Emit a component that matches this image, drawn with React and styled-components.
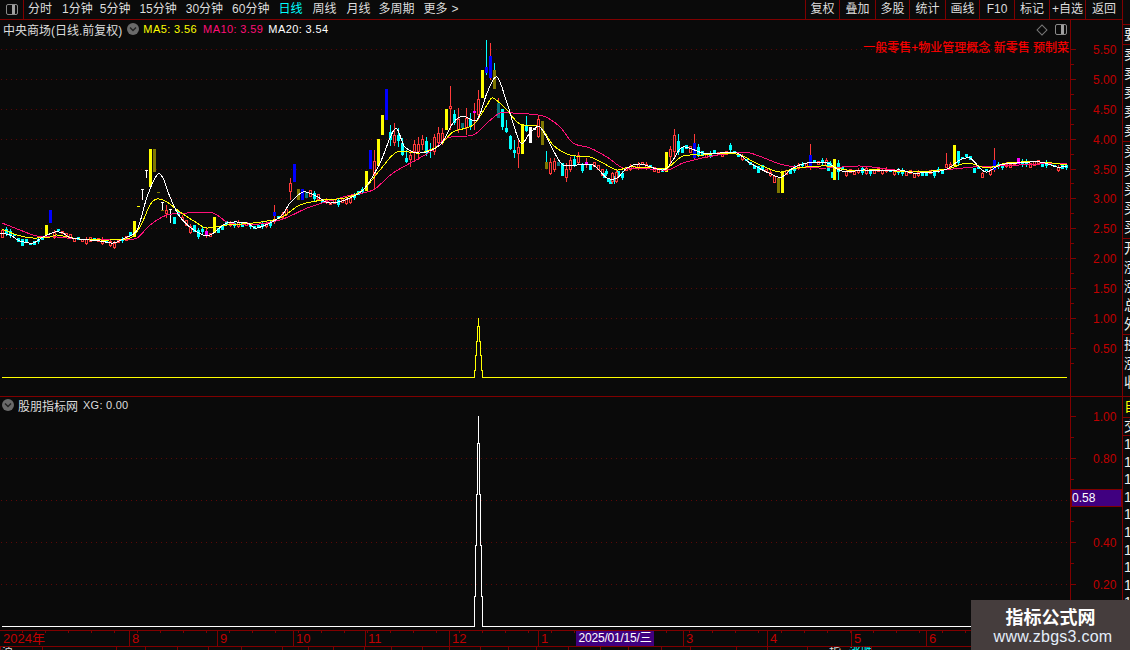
import React from "react";
import styled, { createGlobalStyle } from "styled-components";

const RED = "#800000";
const FONT = `"Liberation Sans", "Noto Sans CJK SC", sans-serif`;

const Global = createGlobalStyle`
  html, body { margin: 0; padding: 0; background: #0a0a0a; }
  * { box-sizing: border-box; }
`;

const Page = styled.div`
  width: 1130px; height: 650px; position: relative; overflow: hidden;
  background: #0a0a0a; font-family: ${FONT}; color: #ddd;
  display: flex;
`;
const MainColumn = styled.div`
  width: 1122px; flex: none; display: flex; flex-direction: column;
`;
const Toolbar = styled.div`
  height: 20px; flex: none; display: flex; align-items: stretch;
  border-bottom: 1px solid ${RED};
`;
const IconCell = styled.div`
  width: 24px; border-right: 1px solid ${RED}; display: flex; align-items: center; justify-content: center;
`;
const PanelGlyph = styled.span`
  display: block; width: 12px; height: 11px; border: 1px solid #8a8a8a; border-radius: 2px;
  background: linear-gradient(to right, #0a0a0a 50%, #a0a0a0 50%, #a0a0a0 85%, #0a0a0a 85%);
`;
const Periods = styled.div`
  display: flex; align-items: center; padding-left: 4px; font-size: 12px; line-height: 19px; flex: 1;
`;
const Period = styled.span`
  margin-right: ${p => p.$gap}px; color: ${p => (p.$active ? "#00ffff" : "#ddd")}; white-space: nowrap;
`;
const ToolButton = styled.div`
  width: ${p => p.$w}px; border-left: 1px solid ${RED}; font-size: 12px; line-height: 18px; text-align: center; white-space: nowrap;
`;
const Charts = styled.div`
  height: 610px; flex: none; display: flex; flex-direction: column;
`;
const Pane = styled.div`
  position: relative; height: ${p => p.$h}px; flex: none; border-bottom: ${p => (p.$rule ? `1px solid ${RED}` : "none")};
`;
const ChartSvg = styled.svg`
  display: block; width: 1122px; height: 100%;
  text { font-family: ${FONT}; font-size: 12px; }
`;
const Legend = styled.div`
  position: absolute; left: ${p => p.$left}px; top: ${p => p.$top}px; display: flex; align-items: center; height: 16px; font-size: 12px; white-space: nowrap;
`;
const Chevron = styled.span`
  width: 12px; height: 12px; border-radius: 50%; background: #6a6a6a; display: inline-flex; align-items: center; justify-content: center; flex: none; margin-left: ${p => p.$ml || 0}px;
`;
const LegendName = styled.span`
  color: #ddd; margin-left: ${p => p.$ml || 0}px;
`;
const Ma = styled.span`
  color: ${p => p.$c}; margin-left: ${p => p.$ml}px; letter-spacing: ${p => p.$ls}px; font-size: 11px;
`;
const Concepts = styled.div`
  position: absolute; right: 53px; top: 20px; color: #ff0000; font-size: 12px; line-height: 16px; white-space: nowrap; -webkit-text-stroke: 0.15px #ff0000;
`;
const PaneTools = styled.div`
  position: absolute; right: 55px; top: 4px; display: flex; align-items: center; gap: 9px;
`;
const Diamond = styled.span`
  width: 8px; height: 8px; border: 1px solid #777; transform: rotate(45deg); display: block;
`;
const TimeAxis = styled.div`
  height: 17px; flex: none; position: relative; display: flex; border-top: 1px solid ${RED}; border-bottom: 1px solid ${RED};
  &::before {
    content: ""; position: absolute; left: 0; right: 0; top: 0; height: 2px;
    background: repeating-linear-gradient(to right, transparent 0 22px, ${RED} 22px 23px);
  }
`;
const Month = styled.div`
  width: ${p => p.$w}px; flex: none; border-left: ${p => (p.$first ? "none" : `1px solid ${RED}`)}; padding-left: ${p => (p.$first ? 3 : 2)}px;
  color: #c00000; font-size: 13px; line-height: 15px; white-space: nowrap;
`;
const DateChip = styled.div`
  position: absolute; left: 576px; top: 0; width: 78px; height: 15px; background: #400080; color: #fff;
  font-size: 12px; line-height: 15px; text-align: center; white-space: nowrap; letter-spacing: -0.2px; overflow: hidden;
`;
const StatusBar = styled.div`
  height: 3px; flex: none; display: flex; overflow: hidden;
`;
const StatusCell = styled.div`
  width: ${p => p.$w}px; flex: none; border-left: 1px solid ${RED}; color: #ddd; padding-left: ${p => p.$pad || 0}px;
  font-size: 12px; line-height: 12px; white-space: nowrap; overflow: hidden;
`;
const StatusAccent = styled.span`
  color: #00ffff; margin-left: 8px;
`;
const Sidebar = styled.div`
  width: 8px; flex: none; height: 650px; border-left: 1px solid ${RED}; overflow: hidden; display: flex; flex-direction: column;
`;
const SideGroup = styled.div`
  height: ${p => p.$h}px; flex: none; overflow: hidden; border-bottom: ${p => (p.$open ? "none" : `1px solid ${RED}`)};
  color: ${p => p.$c || "#eee"}; font-size: 14px; line-height: ${p => p.$lh}px; padding-left: 1px; white-space: nowrap;
`;
const SideRow = styled.div`
  height: ${p => p.$lh}px; width: 20px;
`;
const Watermark = styled.div`
  position: absolute; left: 971px; top: 600px; width: 159px; height: 50px; background: #453d3d;
  display: flex; flex-direction: column; align-items: center; padding-top: 5px;
`;
const WmTitle = styled.div`
  color: #fff; font-size: 18px; font-weight: 700; line-height: 22px; font-family: "Noto Sans CJK SC", sans-serif;
`;
const WmUrl = styled.div`
  color: #e4eefa; font-size: 16px; line-height: 19px; margin-left: 5px; font-family: "Liberation Sans", sans-serif; letter-spacing: 0.25px;
`;

/* ---------- chart data ---------- */
const WHITE = [[0,233],[10,235],[20,241],[33,243],[43,237],[55,232],[63,233],[72,238],[100,241],[113,243],[125,238],[137,230],[147,197],[157,175],[163,178],[170,197],[180,217],[197,232],[210,235],[227,223],[247,223],[257,228],[280,217],[290,203],[303,192],[316,196],[330,203],[350,198],[365,188],[380,163],[395,129],[405,147],[420,153],[440,145],[453,123],[463,116],[477,120],[487,93],[497,77],[507,103],[520,142],[530,133],[540,127],[553,150],[563,165],[577,165],[593,165],[607,178],[617,178],[627,168],[640,164],[663,170],[673,160],[683,147],[703,153],[720,153],[737,153],[750,163],[773,175],[782,177],[793,168],[807,163],[827,163],[837,169],[847,172],[863,170],[880,171],[900,170],[913,173],[933,172],[947,169],[960,160],[970,158],[980,168],[987,172],[1000,165],[1017,163],[1040,162],[1057,167],[1067,166]];
const YELLOW = [[2,229],[17,235],[33,238],[50,237],[57,235],[80,239],[110,240],[130,238],[140,227],[150,205],[157,199],[167,202],[180,212],[197,223],[207,228],[227,225],[253,223],[280,218],[300,205],[323,200],[345,198],[363,190],[380,170],[397,152],[420,153],[440,145],[453,132],[473,125],[487,105],[493,98],[507,110],[520,124],[540,127],[553,145],[570,155],[590,157],[603,163],[617,170],[630,167],[653,168],[667,168],[683,156],[703,155],[723,153],[740,155],[760,165],[780,172],[797,168],[827,166],[847,170],[880,170],[913,172],[947,169],[967,163],[987,168],[1007,163],[1040,162],[1067,165]];
const PINK = [[2,223],[20,230],[37,236],[57,237],[80,239],[123,239],[137,238],[150,225],[167,215],[187,213],[213,213],[227,222],[247,225],[280,220],[310,207],[347,196],[373,190],[393,173],[430,152],[447,138],[473,135],[487,123],[500,113],[513,113],[543,116],[560,127],[573,143],[590,148],[607,157],[623,168],[640,168],[667,170],[683,163],[707,157],[733,153],[750,153],[780,164],[797,167],[827,168],[860,166],[887,169],[913,172],[953,169],[973,167],[1000,166],[1040,164],[1067,164]];

const Y = "#ffff00", B = "#0000ff", O = "#807800", M = "#ff00ff", T = "#08767c", C = "#00ffff", R = "#ff3a3a", W = "#ffffff";
// [x, top, bottom, colour, wickTop, wickBottom, wickColour, hollow]
const SPECIAL = [
  [45,225,235,Y],[49,210,223,B],[133,221,237,Y],[149,149,187,Y],[153,149,172,O],[213,217,233,Y],
  [157,192,193,O],[161,210,211,O],[137,206,207,Y],[145,170,171,W,170,178,W],[141,189,190,W,189,200,W],[161,202,203,W,202,210,W],
  [165,210,214,R,205,218,R,1],[169,209,210,W,209,223,W],[173,217,224,C],[205,231,236,M,228,238,R],
  [273,212,216,B,205,224,R],[289,183,192,R,178,200,R,1],[293,164,182,B],[297,189,200,O],[301,189,200,B],[305,192,198,T],
  [365,171,191,Y],[369,150,169,B],[373,161,175,R,150,190,R,1],[377,139,166,Y],[381,115,135,Y],[385,89,120,B],
  [389,132,140,C,125,146,C],[393,135,143,R,123,146,R,1],[397,135,141,C,128,147,C],[401,143,155,C,138,156,C],[405,158,162,C,150,163,C],
  [409,155,160,R,150,167,R,1],[413,144,152,R,140,162,R,1],[417,144,152,R,137,160,R,1],[421,139,145,R,135,150,R,1],[425,141,153,C,137,156,C],
  [429,149,151,M,143,158,C],[433,137,152,R,134,155,R,1],[437,133,143,R,127,146,R,1],[441,133,142,R,128,145,R,1],[445,109,130,Y],
  [449,106,109,R,86,130,R,1],[453,114,123,C,110,125,C],[457,119,130,R,108,133,R,1],[461,123,128,T],[465,118,128,R,108,135,R,1],[469,119,126,C,113,130,C],
  [473,111,113,M,103,130,R],[477,99,115,R,90,120,R,1],[481,70,98,Y],[485,67,73,B,40,75,C],[489,56,78,B,43,80,R],[493,70,89,O,63,89,C],
  [497,103,118,T,98,118,R],[501,109,127,C,109,130,C],[505,128,132,C,120,133,C],[509,136,149,C,135,150,C],[513,150,153,C,140,158,C],[517,147,154,R,140,168,R,1],
  [521,124,154,Y],[525,125,131,C,116,132,C],[529,127,143,W,127,143,W],[533,128,130,W],[537,119,137,R,115,138,R,1],[541,121,145,O],[545,162,169,O,151,169,C],
  [549,162,174,R,158,175,R,1],[553,161,170,R,158,172,R,1],[557,162,166,T],[561,163,176,C],[565,169,178,R,163,182,R,1],[569,160,170,R,157,172,R,1],[573,159,165,C,155,167,C],[577,155,163,R,152,165,R,1],
  [585,162,165,M,158,168,R],[603,173,178,C],[607,178,182,C],[611,173,182,R,172,184,R,1],[615,172,182,R,170,183,R,1],
  [665,152,172,Y],[669,149,157,R,146,165,R,1],[673,135,152,R,129,157,R,1],[677,141,152,C,134,155,C],[693,143,158,B,134,160,R],[697,147,155,C,144,157,C],
  [729,145,150,C,143,152,C],[777,178,193,O],[781,172,193,Y],[809,155,168,B,144,170,R],[827,162,171,C],[831,172,178,C],[833,159,180,Y],[837,163,172,C,160,180,C],
  [945,164,168,R,153,168,R,1],[953,145,166,Y],[957,151,163,C,151,165,C],[973,168,173,C],[981,173,178,R,172,178,R,1],[993,160,170,B,148,172,R],[1017,158,164,M],
];

function interp(pts, x) {
  if (x <= pts[0][0]) return pts[0][1];
  for (let i = 1; i < pts.length; i++) {
    if (x <= pts[i][0]) {
      const [a, b] = [pts[i - 1], pts[i]];
      return a[1] + ((x - a[0]) / (b[0] - a[0])) * (b[1] - a[1]);
    }
  }
  return pts[pts.length - 1][1];
}
function smooth(pts) {
  let d = `M${pts[0][0]} ${pts[0][1]}`;
  for (let i = 0; i < pts.length - 1; i++) {
    const p0 = pts[Math.max(i - 1, 0)], p1 = pts[i], p2 = pts[i + 1], p3 = pts[Math.min(i + 2, pts.length - 1)];
    const c1x = p1[0] + (p2[0] - p0[0]) / 6, c1y = p1[1] + (p2[1] - p0[1]) / 6;
    const c2x = p2[0] - (p3[0] - p1[0]) / 6, c2y = p2[1] - (p3[1] - p1[1]) / 6;
    d += `C${c1x.toFixed(1)} ${c1y.toFixed(1)} ${c2x.toFixed(1)} ${c2y.toFixed(1)} ${p2[0]} ${p2[1]}`;
  }
  return d;
}
let seed = 20240115;
const rnd = () => ((seed = (seed * 1664525 + 1013904223) % 4294967296) / 4294967296);

function buildCandles() {
  const taken = new Set(SPECIAL.map(s => s[0]));
  const out = [];
  for (let x = 1; x < 1066; x += 4) {
    const a = rnd(), b = rnd(), c = rnd(), d = rnd();
    if (taken.has(x) || (x >= 137 && x <= 170) || (x >= 377 && x < 581)) continue;
    const mid = interp(WHITE, x + 1);
    const vol = Math.min(Math.abs(mid - interp(PINK, x + 1)), 10) * 0.3 + 2;
    const top = Math.round(mid - vol * 0.5 + (a - 0.5) * vol * 1.4);
    const h = Math.max(1, Math.round(1 + b * vol));
    const up = c > 0.5;
    const wick = d > 0.6;
    const base = [x, top, top + h + (up ? 2 : 1), up ? R : C];
    out.push(wick ? [...base, top - 2, top + h + 3, up ? R : C, up ? 1 : 0] : [...base, undefined, undefined, undefined, up ? 1 : 0]);
  }
  return out.concat(SPECIAL);
}
const CANDLES = buildCandles();

const Candle = ({ c }) => {
  const [x, top, bot, col, wt, wb, wc, hollow] = c;
  return (
    <g>
      {wt !== undefined && <line x1={x + 1.5} x2={x + 1.5} y1={wt} y2={wb} stroke={wc} />}
      {hollow ? (
        <rect x={x + 0.5} y={top + 0.5} width={2} height={Math.max(1, bot - top - 1)} fill="#0a0a0a" stroke={col} />
      ) : (
        <rect x={x} y={top} width={3} height={Math.max(1, bot - top)} fill={col} />
      )}
    </g>
  );
};

const stepped = (top, rows, base, endX) => {
  const cx = 478.5;
  let left = `M2 ${base + 0.5}H${cx - rows.length}`;
  let right = `M${endX} ${base + 0.5}H${cx + rows.length}`;
  rows.slice().reverse().forEach(([y], i) => {
    const off = rows.length - i;
    left += `V${y}H${cx - off + 1}`;
    right += `V${y}H${cx + off - 1}`;
  });
  return left + `V${top}` + right + `V${top}`;
};

const Grid = ({ ys }) => (
  <g stroke="#5c0808" strokeDasharray="1 4">
    {ys.map(y => <line key={y} x1="1" x2="1068" y1={y + 0.5} y2={y + 0.5} />)}
  </g>
);
const AxisMarks = ({ marks, minors, top, bottom }) => (
  <g>
    <line x1="1070.5" x2="1070.5" y1={top} y2={bottom} stroke={RED} strokeWidth="1.4" />
    {marks.map(m => (
      <g key={m.t}>
        <line x1="1071" x2="1076" y1={m.y + 0.5} y2={m.y + 0.5} stroke={RED} />
        <text x="1093" y={m.y + 5} fill="#c00000">{m.t}</text>
      </g>
    ))}
    {minors.map(y => <line key={y} x1="1071" x2="1074" y1={y + 0.5} y2={y + 0.5} stroke={RED} />)}
  </g>
);

const PRICE_MARKS = [["5.50",49],["5.00",79],["4.50",109],["4.00",139],["3.50",169],["3.00",198],["2.50",228],["2.00",258],["1.50",288],["1.00",318],["0.50",348]].map(([t, y]) => ({ t, y }));
const PRICE_MINORS = [64,94,124,154,183,213,243,273,303,333,363];
const SUB_MARKS = [["1.00",416],["0.80",458],["0.40",542],["0.20",584]].map(([t, y]) => ({ t, y }));
const SUB_MINORS = [437,479,521,563,605];

const PriceChart = () => (
  <ChartSvg viewBox="0 20 1122 376" shapeRendering="crispEdges">
    <Grid ys={PRICE_MARKS.map(m => m.y)} />
    {CANDLES.map((c, i) => <Candle key={i} c={c} />)}
    <path d={smooth(PINK)} fill="none" stroke="#ff0f78" />
    <path d={smooth(YELLOW)} fill="none" stroke="#ffff00" />
    <path d={smooth(WHITE)} fill="none" stroke="#ffffff" />
    <path d={stepped(318, [[326],[341],[355],[370]], 377, 1067)} fill="none" stroke="#ffff00" />
    <AxisMarks marks={PRICE_MARKS} minors={PRICE_MINORS} top={20} bottom={396} />
  </ChartSvg>
);
const SubChart = () => (
  <ChartSvg viewBox="0 397 1122 233" shapeRendering="crispEdges">
    <Grid ys={[458,500,542,584]} />
    <path d={stepped(416, [[443],[494],[545],[596]], 626, 1067)} fill="none" stroke="#ffffff" />
    <AxisMarks marks={SUB_MARKS} minors={SUB_MINORS} top={397} bottom={630} />
    <rect x="1071" y="489" width="50" height="17" fill="#400080" stroke={RED} />
    <text x="1072" y="502" fill="#ffffff">0.58</text>
  </ChartSvg>
);

const ChevronIcon = ({ ml }) => (
  <Chevron $ml={ml}>
    <svg width="8" height="6" viewBox="0 0 8 6"><path d="M1 1.5 4 4.5 7 1.5" fill="none" stroke="#222" strokeWidth="1.4" /></svg>
  </Chevron>
);

const PERIODS = [["分时",10],["1分钟",7],["5分钟",9],["15分钟",9],["30分钟",9],["60分钟",9],["日线",10,true],["周线",10],["月线",8],["多周期",9],["更多",4],[">",0]];
const BUTTONS = [["复权",34],["叠加",36],["多股",34],["统计",36],["画线",34],["F10",35],["标记",35],["+自选",36],["返回",37]];
const MONTHS = [["2024年",129],["8",88],["9",76],["10",72],["11",84],["12",89],["1",145],["3",84],["4",84],["5",75],["6",122]];
const STATUS = [{w:42,t:"沪"},{w:74},{w:29},{w:32},{w:31},{w:33},{w:41},{w:26},{w:25},{w:31},{w:27},{w:31},{w:27},{w:31},{w:28},{w:28},{w:32},{w:32},{w:28},{w:33},{w:29},{w:46},{w:31},{w:40},{w:64,t:"指",a:"涨跌",pad:21},{w:251}];
const SIDE = [
  { h: 25, lh: 19, t: [""] },
  { h: 20, lh: 19, t: ["要"] },
  { h: 97, lh: 19, t: ["卖","卖","卖","卖","卖"] },
  { h: 97, lh: 19, t: ["买","买","买","买","买"] },
  { h: 96, lh: 19, t: ["开","涨","涨","总","外"] },
  { h: 62, lh: 19, t: ["换","涨","收"] },
  { h: 21, lh: 19, t: ["自"], c: "#ffff00" },
  { h: 18, lh: 17, t: ["交"] },
  { h: 214, lh: 17.6, t: Array(12).fill("1"), open: true },
];

export default function App() {
  return (
    <Page>
      <Global />
      <MainColumn>
        <Toolbar>
          <IconCell><PanelGlyph /></IconCell>
          <Periods>
            {PERIODS.map(([t, g, a]) => <Period key={t} $gap={g} $active={a}>{t}</Period>)}
          </Periods>
          {BUTTONS.map(([t, w]) => <ToolButton key={t} $w={w}>{t}</ToolButton>)}
        </Toolbar>
        <Charts>
          <Pane $h={377} $rule>
            <PriceChart />
            <Legend $top={1} $left={3}>
              <LegendName>中央商场(日线.前复权)</LegendName>
              <ChevronIcon ml={5} />
              <Ma $c="#ffff00" $ml={4} $ls={0.4}>MA5: 3.56</Ma>
              <Ma $c="#ff0f78" $ml={6} $ls={0.4}>MA10: 3.59</Ma>
              <Ma $c="#ffffff" $ml={5} $ls={0.4}>MA20: 3.54</Ma>
            </Legend>
            <PaneTools><Diamond /><PanelGlyph /></PaneTools>
            <Concepts>一般零售+物业管理概念 新零售 预制菜</Concepts>
          </Pane>
          <Pane $h={233}>
            <SubChart />
            <Legend $top={0} $left={2}>
              <ChevronIcon />
              <LegendName $ml={4}>股朋指标网</LegendName>
              <Ma $c="#ddd" $ml={5} $ls={0.25}>XG: 0.00</Ma>
            </Legend>
          </Pane>
        </Charts>
        <TimeAxis>
          {MONTHS.map(([t, w], i) => <Month key={t} $w={w} $first={i === 0}>{t}</Month>)}
          <DateChip>2025/01/15/三</DateChip>
        </TimeAxis>
        <StatusBar>
          {STATUS.map((s, i) => (
            <StatusCell key={i} $w={s.w} $pad={s.pad}>{s.t}{s.a && <StatusAccent>{s.a}</StatusAccent>}</StatusCell>
          ))}
        </StatusBar>
      </MainColumn>
      <Sidebar>
        {SIDE.map((g, i) => (
          <SideGroup key={i} $h={g.h} $lh={g.lh} $c={g.c} $open={g.open}>
            {g.t.map((s, j) => <SideRow key={j} $lh={g.lh}>{s}</SideRow>)}
          </SideGroup>
        ))}
      </Sidebar>
      <Watermark>
        <WmTitle>指标公式网</WmTitle>
        <WmUrl>www.zbgs3.com</WmUrl>
      </Watermark>
    </Page>
  );
}
